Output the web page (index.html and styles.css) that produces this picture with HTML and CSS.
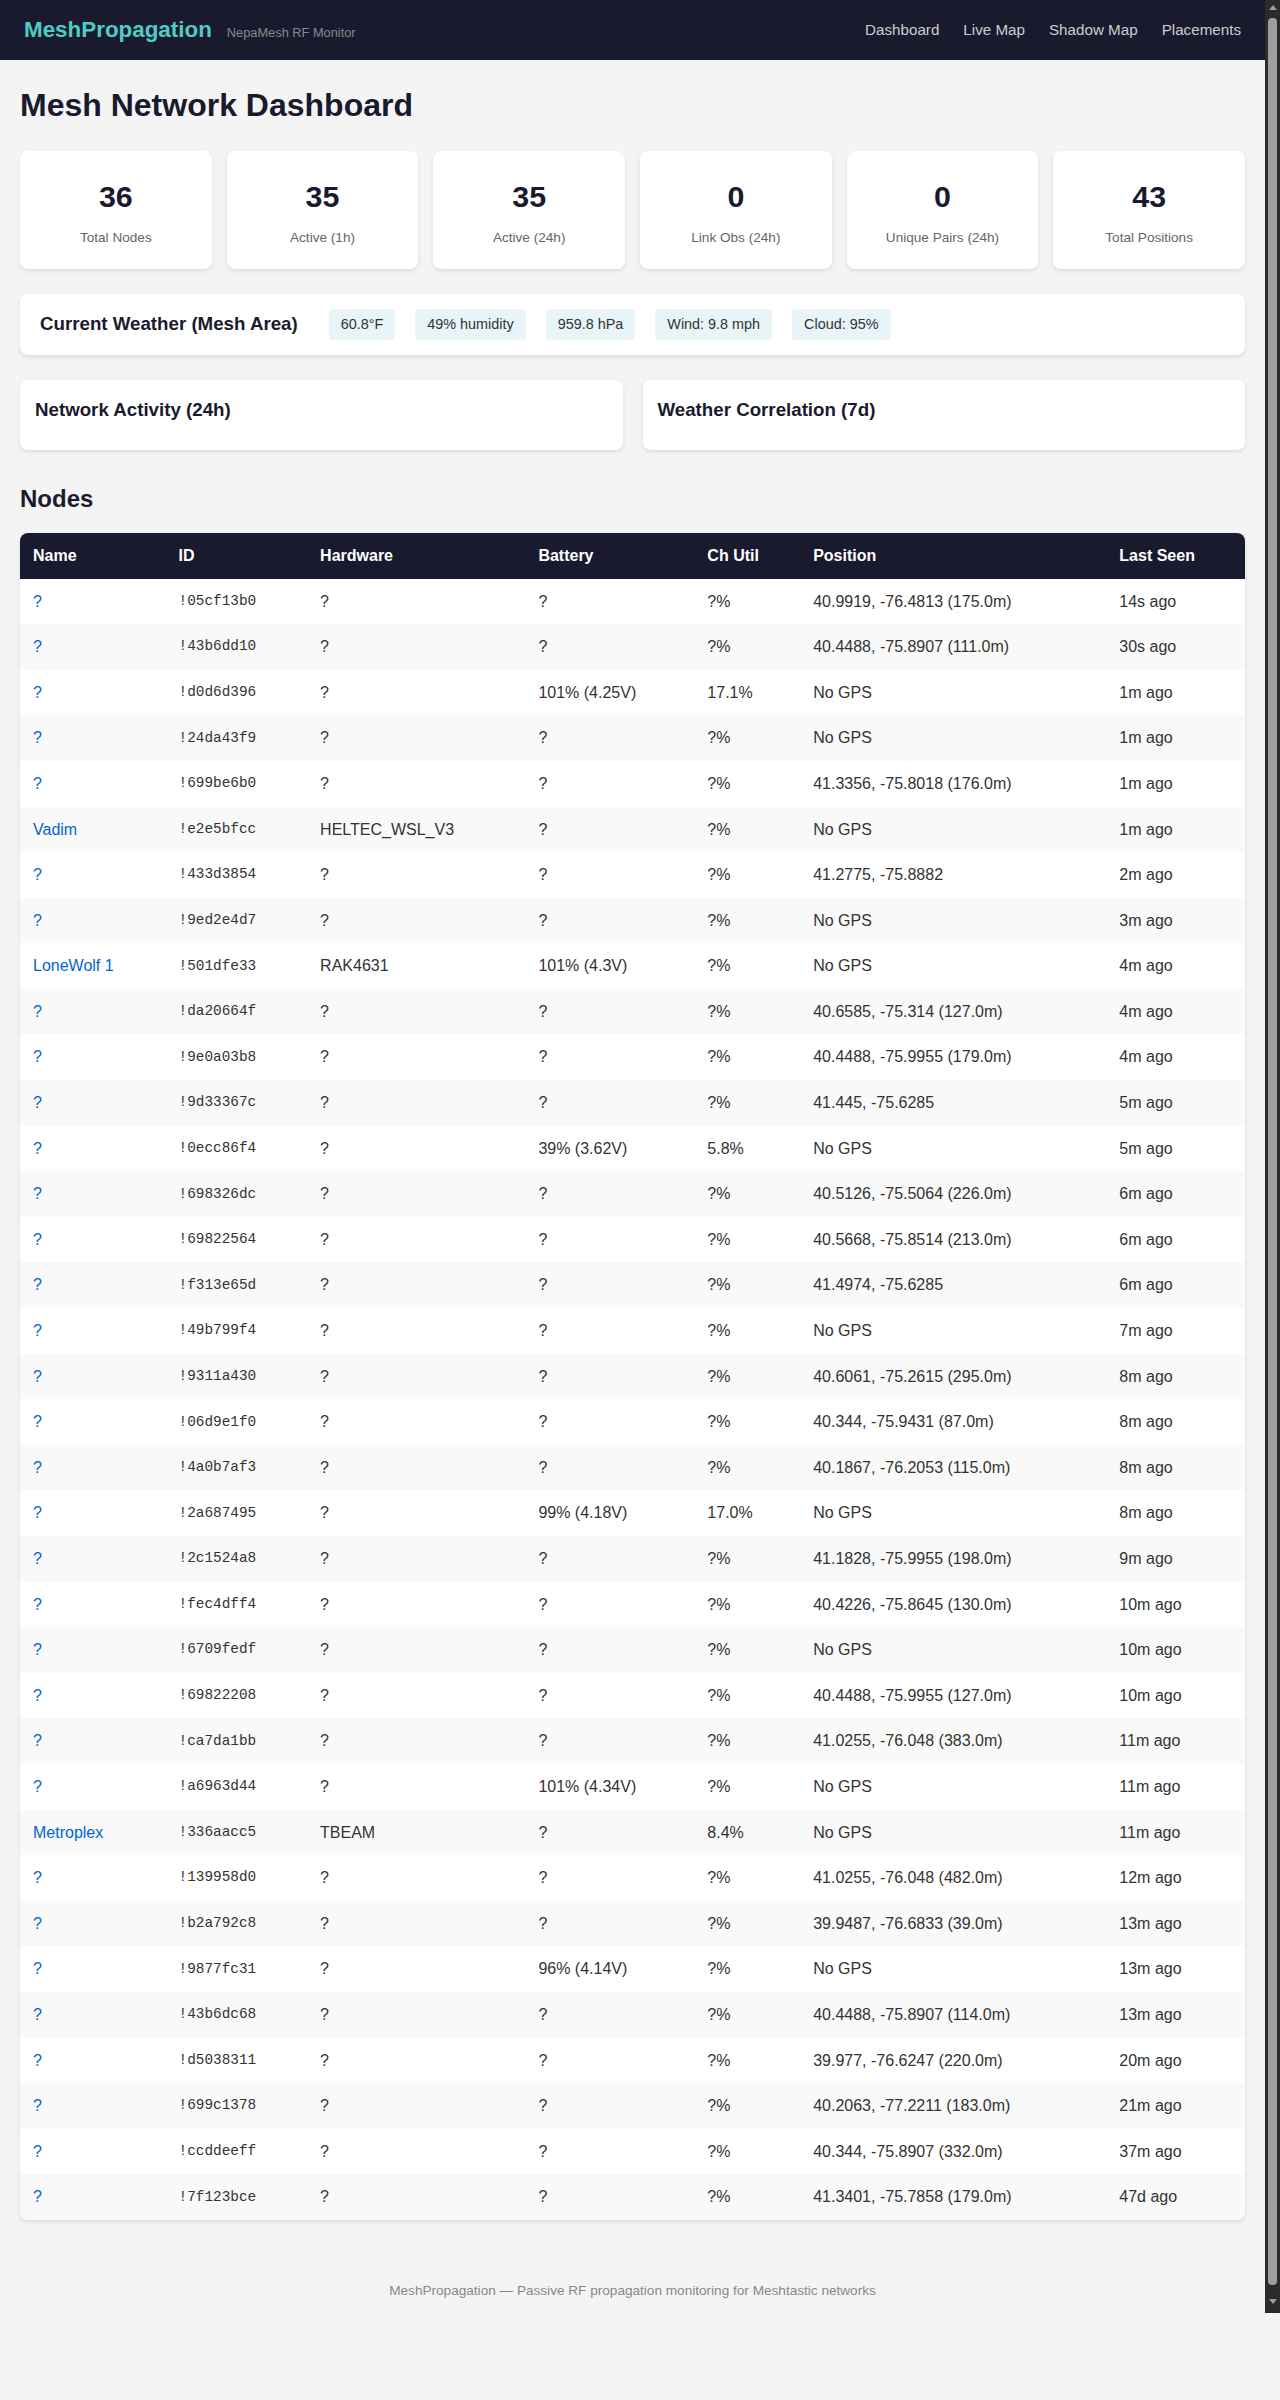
FILE: index.html
```html
<!DOCTYPE html>
<html lang="en">
<head>
  <meta charset="UTF-8" />
  <meta name="viewport" content="width=device-width, initial-scale=1.0" />
  <title>MeshPropagation - Dashboard</title>
  <link rel="stylesheet" href="styles.css">
</head>
<body>
<div class="app">

  <!-- Top bar -->
  <header class="navbar">
    <div class="brand">
      <span class="logo">MeshPropagation</span>
      <span class="subtitle">NepaMesh RF Monitor</span>
    </div>
    <nav class="nav-links">
      <a href="#">Dashboard</a>
      <a href="#">Live Map</a>
      <a href="#">Shadow Map</a>
      <a href="#">Placements</a>
    </nav>
  </header>

  <main class="container">
    <h1>Mesh Network Dashboard</h1>

    <!-- Stats -->
    <div class="stats-grid">
      <div class="stat-card"><div class="stat-value">36</div><div class="stat-label">Total Nodes</div></div>
      <div class="stat-card"><div class="stat-value">35</div><div class="stat-label">Active (1h)</div></div>
      <div class="stat-card"><div class="stat-value">35</div><div class="stat-label">Active (24h)</div></div>
      <div class="stat-card"><div class="stat-value">0</div><div class="stat-label">Link Obs (24h)</div></div>
      <div class="stat-card"><div class="stat-value">0</div><div class="stat-label">Unique Pairs (24h)</div></div>
      <div class="stat-card"><div class="stat-value">43</div><div class="stat-label">Total Positions</div></div>
    </div>

    <!-- Weather -->
    <div class="weather-bar">
      <h3>Current Weather (Mesh Area)</h3>
      <span class="pill">60.8°F</span>
      <span class="pill">49% humidity</span>
      <span class="pill">959.8 hPa</span>
      <span class="pill">Wind: 9.8 mph</span>
      <span class="pill">Cloud: 95%</span>
    </div>

    <!-- Charts -->
    <div class="charts-grid">
      <div class="chart-card">
        <h3>Network Activity (24h)</h3>
        <div class="chart" id="activityChart"></div>
      </div>
      <div class="chart-card">
        <h3>Weather Correlation (7d)</h3>
        <div class="chart" id="weatherChart"></div>
      </div>
    </div>

    <h2>Nodes</h2>
    <div class="table-wrap">
      <table>
        <thead>
          <tr><th>Name</th><th>ID</th><th>Hardware</th><th>Battery</th><th>Ch Util</th><th>Position</th><th>Last Seen</th></tr>
        </thead>
        <tbody>
          <tr><td><a href="#">?</a></td><td class="mono">!05cf13b0</td><td>?</td><td>?</td><td>?%</td><td>40.9919, -76.4813 (175.0m)</td><td>14s ago</td></tr>
          <tr><td><a href="#">?</a></td><td class="mono">!43b6dd10</td><td>?</td><td>?</td><td>?%</td><td>40.4488, -75.8907 (111.0m)</td><td>30s ago</td></tr>
          <tr><td><a href="#">?</a></td><td class="mono">!d0d6d396</td><td>?</td><td>101% (4.25V)</td><td>17.1%</td><td>No GPS</td><td>1m ago</td></tr>
          <tr><td><a href="#">?</a></td><td class="mono">!24da43f9</td><td>?</td><td>?</td><td>?%</td><td>No GPS</td><td>1m ago</td></tr>
          <tr><td><a href="#">?</a></td><td class="mono">!699be6b0</td><td>?</td><td>?</td><td>?%</td><td>41.3356, -75.8018 (176.0m)</td><td>1m ago</td></tr>
          <tr><td><a href="#">Vadim</a></td><td class="mono">!e2e5bfcc</td><td>HELTEC_WSL_V3</td><td>?</td><td>?%</td><td>No GPS</td><td>1m ago</td></tr>
          <tr><td><a href="#">?</a></td><td class="mono">!433d3854</td><td>?</td><td>?</td><td>?%</td><td>41.2775, -75.8882</td><td>2m ago</td></tr>
          <tr><td><a href="#">?</a></td><td class="mono">!9ed2e4d7</td><td>?</td><td>?</td><td>?%</td><td>No GPS</td><td>3m ago</td></tr>
          <tr><td><a href="#">LoneWolf 1</a></td><td class="mono">!501dfe33</td><td>RAK4631</td><td>101% (4.3V)</td><td>?%</td><td>No GPS</td><td>4m ago</td></tr>
          <tr><td><a href="#">?</a></td><td class="mono">!da20664f</td><td>?</td><td>?</td><td>?%</td><td>40.6585, -75.314 (127.0m)</td><td>4m ago</td></tr>
          <tr><td><a href="#">?</a></td><td class="mono">!9e0a03b8</td><td>?</td><td>?</td><td>?%</td><td>40.4488, -75.9955 (179.0m)</td><td>4m ago</td></tr>
          <tr><td><a href="#">?</a></td><td class="mono">!9d33367c</td><td>?</td><td>?</td><td>?%</td><td>41.445, -75.6285</td><td>5m ago</td></tr>
          <tr><td><a href="#">?</a></td><td class="mono">!0ecc86f4</td><td>?</td><td>39% (3.62V)</td><td>5.8%</td><td>No GPS</td><td>5m ago</td></tr>
          <tr><td><a href="#">?</a></td><td class="mono">!698326dc</td><td>?</td><td>?</td><td>?%</td><td>40.5126, -75.5064 (226.0m)</td><td>6m ago</td></tr>
          <tr><td><a href="#">?</a></td><td class="mono">!69822564</td><td>?</td><td>?</td><td>?%</td><td>40.5668, -75.8514 (213.0m)</td><td>6m ago</td></tr>
          <tr><td><a href="#">?</a></td><td class="mono">!f313e65d</td><td>?</td><td>?</td><td>?%</td><td>41.4974, -75.6285</td><td>6m ago</td></tr>
          <tr><td><a href="#">?</a></td><td class="mono">!49b799f4</td><td>?</td><td>?</td><td>?%</td><td>No GPS</td><td>7m ago</td></tr>
          <tr><td><a href="#">?</a></td><td class="mono">!9311a430</td><td>?</td><td>?</td><td>?%</td><td>40.6061, -75.2615 (295.0m)</td><td>8m ago</td></tr>
          <tr><td><a href="#">?</a></td><td class="mono">!06d9e1f0</td><td>?</td><td>?</td><td>?%</td><td>40.344, -75.9431 (87.0m)</td><td>8m ago</td></tr>
          <tr><td><a href="#">?</a></td><td class="mono">!4a0b7af3</td><td>?</td><td>?</td><td>?%</td><td>40.1867, -76.2053 (115.0m)</td><td>8m ago</td></tr>
          <tr><td><a href="#">?</a></td><td class="mono">!2a687495</td><td>?</td><td>99% (4.18V)</td><td>17.0%</td><td>No GPS</td><td>8m ago</td></tr>
          <tr><td><a href="#">?</a></td><td class="mono">!2c1524a8</td><td>?</td><td>?</td><td>?%</td><td>41.1828, -75.9955 (198.0m)</td><td>9m ago</td></tr>
          <tr><td><a href="#">?</a></td><td class="mono">!fec4dff4</td><td>?</td><td>?</td><td>?%</td><td>40.4226, -75.8645 (130.0m)</td><td>10m ago</td></tr>
          <tr><td><a href="#">?</a></td><td class="mono">!6709fedf</td><td>?</td><td>?</td><td>?%</td><td>No GPS</td><td>10m ago</td></tr>
          <tr><td><a href="#">?</a></td><td class="mono">!69822208</td><td>?</td><td>?</td><td>?%</td><td>40.4488, -75.9955 (127.0m)</td><td>10m ago</td></tr>
          <tr><td><a href="#">?</a></td><td class="mono">!ca7da1bb</td><td>?</td><td>?</td><td>?%</td><td>41.0255, -76.048 (383.0m)</td><td>11m ago</td></tr>
          <tr><td><a href="#">?</a></td><td class="mono">!a6963d44</td><td>?</td><td>101% (4.34V)</td><td>?%</td><td>No GPS</td><td>11m ago</td></tr>
          <tr><td><a href="#">Metroplex</a></td><td class="mono">!336aacc5</td><td>TBEAM</td><td>?</td><td>8.4%</td><td>No GPS</td><td>11m ago</td></tr>
          <tr><td><a href="#">?</a></td><td class="mono">!139958d0</td><td>?</td><td>?</td><td>?%</td><td>41.0255, -76.048 (482.0m)</td><td>12m ago</td></tr>
          <tr><td><a href="#">?</a></td><td class="mono">!b2a792c8</td><td>?</td><td>?</td><td>?%</td><td>39.9487, -76.6833 (39.0m)</td><td>13m ago</td></tr>
          <tr><td><a href="#">?</a></td><td class="mono">!9877fc31</td><td>?</td><td>96% (4.14V)</td><td>?%</td><td>No GPS</td><td>13m ago</td></tr>
          <tr><td><a href="#">?</a></td><td class="mono">!43b6dc68</td><td>?</td><td>?</td><td>?%</td><td>40.4488, -75.8907 (114.0m)</td><td>13m ago</td></tr>
          <tr><td><a href="#">?</a></td><td class="mono">!d5038311</td><td>?</td><td>?</td><td>?%</td><td>39.977, -76.6247 (220.0m)</td><td>20m ago</td></tr>
          <tr><td><a href="#">?</a></td><td class="mono">!699c1378</td><td>?</td><td>?</td><td>?%</td><td>40.2063, -77.2211 (183.0m)</td><td>21m ago</td></tr>
          <tr><td><a href="#">?</a></td><td class="mono">!ccddeeff</td><td>?</td><td>?</td><td>?%</td><td>40.344, -75.8907 (332.0m)</td><td>37m ago</td></tr>
          <tr><td><a href="#">?</a></td><td class="mono">!7f123bce</td><td>?</td><td>?</td><td>?%</td><td>41.3401, -75.7858 (179.0m)</td><td>47d ago</td></tr>
        </tbody>
      </table>
    </div>
  </main>

  <footer class="footer">
    MeshPropagation — Passive RF propagation monitoring for Meshtastic networks
  </footer>

</div>

<!-- page scrollbar -->
<div class="scrollbar"><div class="thumb"></div></div>

</body>
</html>
```

FILE: styles.css
```css
* {
  box-sizing: border-box;
  margin: 0;
  padding: 0;
}

html, body {
  background-color: #f4f4f4;
  font-family: 'Liberation Sans', Arial, sans-serif;
  color: #333;
  line-height: 1.6;
}

body {
  display: flex;
  align-items: flex-start;
}

/* page scroller */
.app {
  flex: 1;
  min-width: 0;
  height: 2313px;
  overflow-y: auto;
}

.scrollbar {
  width: 15px;
  height: 2313px;
  flex-shrink: 0;
  background-color: #2b2b2b;
  display: flex;
  flex-direction: column;
  align-items: center;
  padding: 5px 0 9px;
}

.scrollbar::before,
.scrollbar::after {
  content: '';
  width: 0;
  height: 0;
  border-left: 4px solid transparent;
  border-right: 4px solid transparent;
}

.scrollbar::before {
  border-bottom: 5px solid #9e9e9e;
  margin-bottom: 8px;
}

.scrollbar::after {
  border-top: 5px solid #9e9e9e;
}

.thumb {
  flex: 1;
  width: 9px;
  margin-bottom: 14px;
  border-radius: 4px;
  background-color: #9e9e9e;
}

.navbar {
  height: 60px;
  padding: 0 24px;
  background-color: #1a1a2e;
  display: flex;
  align-items: center;
  justify-content: space-between;
}

.brand {
  display: flex;
  align-items: baseline;
  gap: 15px;
}

.logo {
  font-size: 1.4rem;
  font-weight: bold;
  color: #4ecdc4;
}

.subtitle {
  font-size: 0.8rem;
  color: #888;
}

.nav-links {
  display: flex;
  gap: 24px;
}

.nav-links a {
  color: #ccc;
  text-decoration: none;
  font-size: 0.95rem;
}

.container {
  padding: 20px 20px 20px;
}

h1 {
  font-size: 2rem;
  color: #1a1a2e;
  margin-bottom: 20px;
}

h2 {
  font-size: 1.5rem;
  color: #1a1a2e;
  margin-bottom: 15px;
}

h3 {
  font-size: 1.17em;
  color: #1a1a2e;
}

.stats-grid {
  display: grid;
  grid-template-columns: repeat(6, 1fr);
  gap: 15px;
  margin-bottom: 25px;
}

.stat-card {
  background: #fff;
  border-radius: 8px;
  box-shadow: 0 2px 4px rgba(0, 0, 0, 0.1);
  padding: 21px 10px 20px;
  text-align: center;
}

.stat-value {
  font-size: 1.9rem;
  font-weight: bold;
  color: #1a1a2e;
  margin-bottom: 6px;
}

.stat-label {
  font-size: 0.85rem;
  color: #666;
}

.weather-bar {
  background: #fff;
  border-radius: 8px;
  box-shadow: 0 2px 4px rgba(0, 0, 0, 0.1);
  padding: 15px 20px;
  display: flex;
  align-items: center;
  gap: 20px;
  margin-bottom: 25px;
}

.weather-bar h3 {
  margin-right: 11px;
}

.pill {
  background: #e8f4f8;
  border-radius: 4px;
  padding: 4px 12px;
  font-size: 0.9rem;
  color: #333;
}

.charts-grid {
  display: grid;
  grid-template-columns: 1fr 1fr;
  gap: 20px;
  margin-bottom: 30px;
}

.chart-card {
  background: #fff;
  border-radius: 8px;
  box-shadow: 0 2px 4px rgba(0, 0, 0, 0.1);
  padding: 15px;
}

.chart-card h3 {
  margin-bottom: 10px;
}

.table-wrap {
  background: #fff;
  border-radius: 8px;
  box-shadow: 0 2px 4px rgba(0, 0, 0, 0.1);
  overflow: hidden;
}

table {
  width: 100%;
  border-collapse: collapse;
}

th {
  background-color: #1a1a2e;
  color: #fff;
  text-align: left;
  padding: 10px 13px;
}

td {
  padding: 10px 13px;
}

tbody tr:nth-child(even) {
  background-color: #f9f9f9;
}

td a {
  color: #0066cc;
  text-decoration: none;
}

.mono {
  font-family: 'Liberation Mono', 'Courier New', monospace;
  font-size: 0.9em;
}

.footer {
  text-align: center;
  padding: 40px 20px 24px;
  font-size: 0.85rem;
  color: #888;
}
```
